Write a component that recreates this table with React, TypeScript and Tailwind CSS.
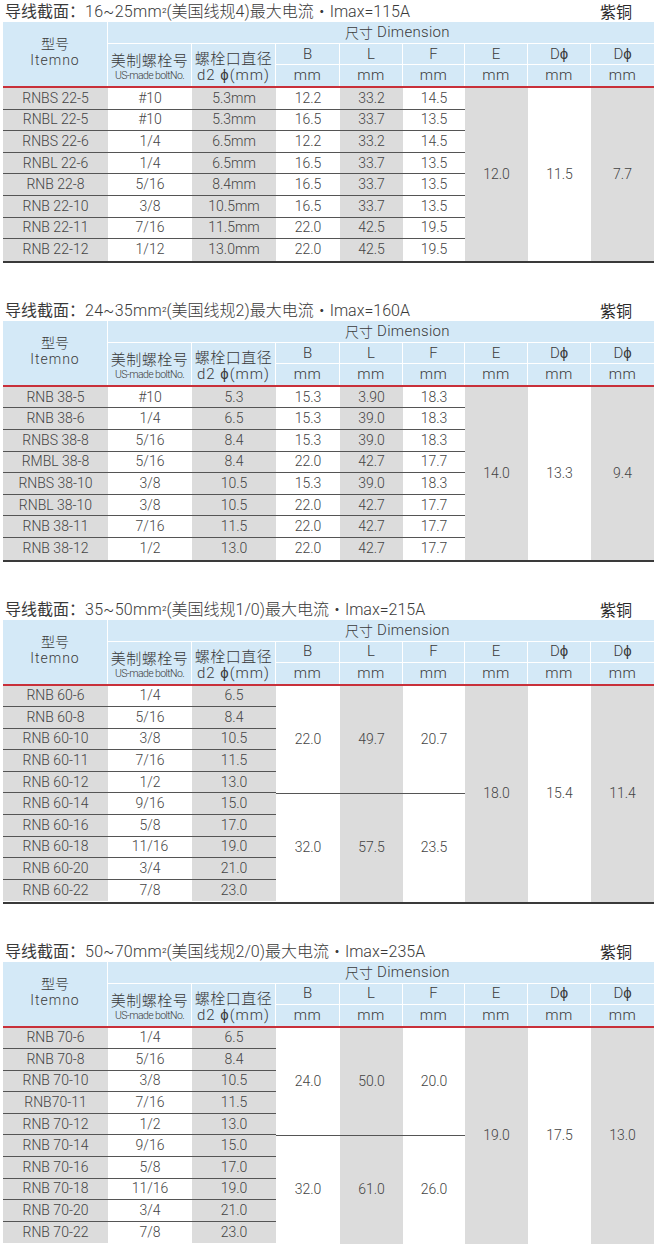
import React from 'react';

const LATIN = "font-['Roboto','Noto_Sans_CJK_SC',sans-serif]";

// column widths: 型号, 美制, 螺栓, B, L, F, E, Dϕ, Dϕ
const COLS = ['w-[105px]', 'w-[84px]', 'w-[84px]', 'w-[64px]', 'w-[63px]', 'w-[62px]', 'w-[63px]', 'w-[63px]', 'w-[63px]'];
const BG = ['bg-[#dcdcdc]', 'bg-white', 'bg-[#dcdcdc]', 'bg-white', 'bg-[#dcdcdc]', 'bg-white', 'bg-[#dcdcdc]', 'bg-white', 'bg-[#dcdcdc]'];

type Row = string[];

interface SimpleTable {
  kind: 'simple';
  title: string[];
  rows: Row[];
  merged: string[];
}

interface GroupTable {
  kind: 'group';
  title: string[];
  rows: Row[];
  groups: string[][];
  merged: string[];
}

const tables: (SimpleTable | GroupTable)[] = [
  {
    kind: 'simple',
    title: ['16~25mm', '(美国线规4)最大电流・Imax=115A'],
    rows: [
      ['RNBS 22-5', '#10', '5.3mm', '12.2', '33.2', '14.5'],
      ['RNBL 22-5', '#10', '5.3mm', '16.5', '33.7', '13.5'],
      ['RNBS 22-6', '1/4', '6.5mm', '12.2', '33.2', '14.5'],
      ['RNBL 22-6', '1/4', '6.5mm', '16.5', '33.7', '13.5'],
      ['RNB 22-8', '5/16', '8.4mm', '16.5', '33.7', '13.5'],
      ['RNB 22-10', '3/8', '10.5mm', '16.5', '33.7', '13.5'],
      ['RNB 22-11', '7/16', '11.5mm', '22.0', '42.5', '19.5'],
      ['RNB 22-12', '1/12', '13.0mm', '22.0', '42.5', '19.5'],
    ],
    merged: ['12.0', '11.5', '7.7'],
  },
  {
    kind: 'simple',
    title: ['24~35mm', '(美国线规2)最大电流・Imax=160A'],
    rows: [
      ['RNB 38-5', '#10', '5.3', '15.3', '3.90', '18.3'],
      ['RNB 38-6', '1/4', '6.5', '15.3', '39.0', '18.3'],
      ['RNBS 38-8', '5/16', '8.4', '15.3', '39.0', '18.3'],
      ['RMBL 38-8', '5/16', '8.4', '22.0', '42.7', '17.7'],
      ['RNBS 38-10', '3/8', '10.5', '15.3', '39.0', '18.3'],
      ['RNBL 38-10', '3/8', '10.5', '22.0', '42.7', '17.7'],
      ['RNB 38-11', '7/16', '11.5', '22.0', '42.7', '17.7'],
      ['RNB 38-12', '1/2', '13.0', '22.0', '42.7', '17.7'],
    ],
    merged: ['14.0', '13.3', '9.4'],
  },
  {
    kind: 'group',
    title: ['35~50mm', '(美国线规1/0)最大电流・Imax=215A'],
    rows: [
      ['RNB 60-6', '1/4', '6.5'],
      ['RNB 60-8', '5/16', '8.4'],
      ['RNB 60-10', '3/8', '10.5'],
      ['RNB 60-11', '7/16', '11.5'],
      ['RNB 60-12', '1/2', '13.0'],
      ['RNB 60-14', '9/16', '15.0'],
      ['RNB 60-16', '5/8', '17.0'],
      ['RNB 60-18', '11/16', '19.0'],
      ['RNB 60-20', '3/4', '21.0'],
      ['RNB 60-22', '7/8', '23.0'],
    ],
    groups: [
      ['22.0', '49.7', '20.7'],
      ['32.0', '57.5', '23.5'],
    ],
    merged: ['18.0', '15.4', '11.4'],
  },
  {
    kind: 'group',
    title: ['50~70mm', '(美国线规2/0)最大电流・Imax=235A'],
    rows: [
      ['RNB 70-6', '1/4', '6.5'],
      ['RNB 70-8', '5/16', '8.4'],
      ['RNB 70-10', '3/8', '10.5'],
      ['RNB70-11', '7/16', '11.5'],
      ['RNB 70-12', '1/2', '13.0'],
      ['RNB 70-14', '9/16', '15.0'],
      ['RNB 70-16', '5/8', '17.0'],
      ['RNB 70-18', '11/16', '19.0'],
      ['RNB 70-20', '3/4', '21.0'],
      ['RNB 70-22', '7/8', '23.0'],
    ],
    groups: [
      ['24.0', '50.0', '20.0'],
      ['32.0', '61.0', '26.0'],
    ],
    merged: ['19.0', '17.5', '13.0'],
  },
];

const Title = ({ parts }: { parts: string[] }) => (
  <div className="flex h-[22px] items-center justify-between pl-[5px] pr-[23px] text-[16px] leading-[20px] text-[#3a3a3a]">
    <span className="whitespace-nowrap">
      <span className="font-['Noto_Sans_CJK_SC',sans-serif] font-normal">导线截面：</span>
      <span className={`${LATIN} font-light tracking-[0.3px]`}>{parts[0]}</span>
      <sup className={`${LATIN} text-[8px]`}>2</sup>
      <span className={`${LATIN} font-light`}>{parts[1]}</span>
    </span>
    <span className="font-['Noto_Sans_CJK_SC',sans-serif] font-normal text-[#2a2a2a]">紫铜</span>
  </div>
);

const Header = () => {
  const hcell = 'flex items-center justify-center border-white';
  return (
    <div className="grid grid-cols-[105px_84px_84px_64px_63px_62px_63px_63px_63px] grid-rows-[22px_21px_21px] border-b-2 border-[#c8303a] bg-[#d4e9f7] text-[#3a3a3a] shadow-[0_1px_0_#bbb]">
      <div className={`${hcell} row-span-3 flex-col border-r pb-[4px] leading-[17px]`}>
        <span className="font-['Noto_Sans_CJK_SC',sans-serif] text-[14px]">型号</span>
        <span className={`${LATIN} font-light text-[14px] tracking-[1px]`}>Itemno</span>
      </div>
      <div className="col-span-8 flex items-center border-b border-white pl-[237px]">
        <span className="font-['Noto_Sans_CJK_SC',sans-serif] text-[14px]">尺寸</span>
        <span className={`${LATIN} font-light text-[15px] ml-[4px] tracking-[0.3px]`}>Dimension</span>
      </div>
      <div className={`${hcell} row-span-2 flex-col border-r pt-[3px]`}>
        <span className="font-['Noto_Sans_CJK_SC',sans-serif] text-[15px] leading-[19px] tracking-[0.5px]">美制螺栓号</span>
        <span className={`${LATIN} text-[10.5px] leading-[14px] tracking-[-0.6px]`}>US-made boltNo.</span>
      </div>
      <div className={`${hcell} row-span-2 flex-col border-r pt-[2px]`}>
        <span className="block h-[19px] font-['Noto_Sans_CJK_SC',sans-serif] text-[15px] leading-[19px] tracking-[0.5px]">螺栓口直径</span>
        <span className={`block h-[17px] ${LATIN} font-light text-[15px] leading-[17px] tracking-[1px]`}>
          d2 <span className="leading-none">ϕ</span>(mm)
        </span>
      </div>
      {['B', 'L', 'F', 'E', 'Dϕ', 'Dϕ'].map((t, i) => (
        <div key={`h${i}`} className={`${hcell} border-b ${i < 5 ? 'border-r' : ''} ${LATIN} font-light text-[15px]`}>
          {t}
        </div>
      ))}
      {[0, 1, 2, 3, 4, 5].map((i) => (
        <div key={`m${i}`} className={`${hcell} ${i < 5 ? 'border-r' : ''} ${LATIN} font-light text-[15px] tracking-[0.5px]`}>
          mm
        </div>
      ))}
    </div>
  );
};

const Cell = ({ col, children, className = '' }: { col: number; children: React.ReactNode; className?: string }) => (
  <div className={`${COLS[col]} ${BG[col]} flex items-center justify-center ${className}`}>{children}</div>
);

const Rows = ({ rows }: { rows: Row[] }) => (
  <div className="flex flex-col">
    {rows.map((r, ri) => (
      <div key={ri} className={`flex h-[21.6px] ${ri < rows.length - 1 ? 'border-b border-[#555]' : ''}`}>
        {r.map((v, ci) => (
          <Cell key={ci} col={ci}>
            {v}
          </Cell>
        ))}
      </div>
    ))}
  </div>
);

const SimpleBody = ({ t }: { t: SimpleTable }) => (
  <div className="flex border-b-2 border-[#3a3a3a]">
    <Rows rows={t.rows} />
    {t.merged.map((v, i) => (
      <Cell key={i} col={6 + i}>
        {v}
      </Cell>
    ))}
  </div>
);

const GroupBody = ({ t }: { t: GroupTable }) => (
  <div className="flex border-b-2 border-[#3a3a3a]">
    <Rows rows={t.rows} />
    <div className="flex flex-col">
      {t.groups.map((g, gi) => (
        <div key={gi} className={`flex h-[108px] ${gi === 0 ? 'border-b border-[#555]' : ''}`}>
          {g.map((v, ci) => (
            <Cell key={ci} col={3 + ci}>
              {v}
            </Cell>
          ))}
        </div>
      ))}
    </div>
    {t.merged.map((v, i) => (
      <Cell key={i} col={6 + i}>
        {v}
      </Cell>
    ))}
  </div>
);

export default function App() {
  return (
    <div className="h-[1244px] w-[655px] overflow-hidden bg-white">
      {tables.map((t, i) => (
        <section key={i} className="mb-[36px]">
          <Title parts={t.title} />
          <div className={`ml-[3px] w-[651px] ${LATIN} font-light text-[14px] text-[#444]`}>
            <Header />
            {t.kind === 'simple' ? <SimpleBody t={t} /> : <GroupBody t={t} />}
          </div>
        </section>
      ))}
    </div>
  );
}
